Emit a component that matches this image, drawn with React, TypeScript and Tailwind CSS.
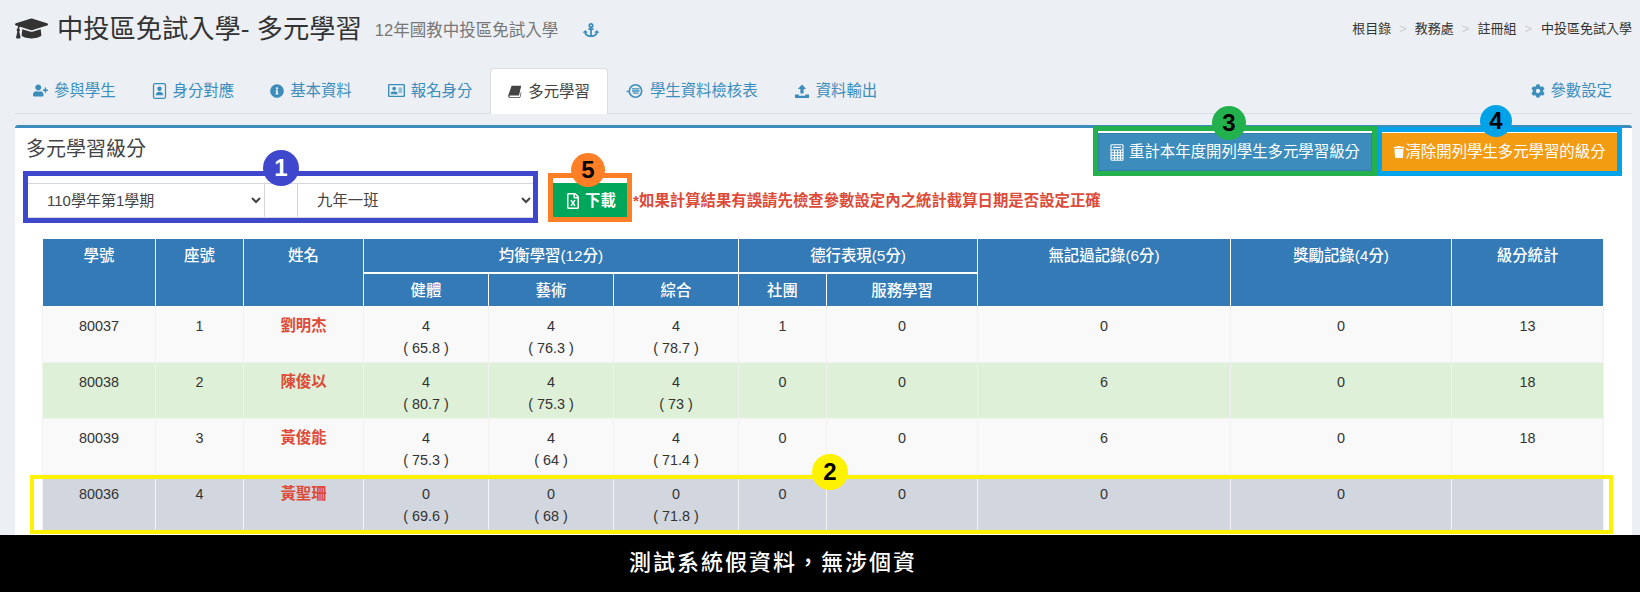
import type { ReactNode } from 'react'
import {
  FaAnchor,
  FaCog,
  FaGraduationCap,
  FaInfoCircle,
  FaRegAddressCard,
  FaRegFileExcel,
  FaTrash,
  FaUserPlus,
} from 'react-icons/fa'

const font = "font-['Liberation_Sans','Noto_Sans_CJK_TC',sans-serif]"

function BadgeIcon() {
  return (
    <svg viewBox="0 0 15 16" className="h-[16px] w-[15px]" fill="currentColor">
      <rect x="1.5" y="0.7" width="12" height="14.6" rx="1.5" fill="none" stroke="currentColor" strokeWidth="1.3" />
      <circle cx="7.5" cy="5.8" r="2.2" />
      <path d="M3.8 12.3c0-2.4 1.5-3.6 3.7-3.6s3.7 1.2 3.7 3.6z" />
    </svg>
  )
}

function BookIcon() {
  return (
    <svg viewBox="0 0 14 14" className="h-[14px] w-[14px]" fill="currentColor">
      <path d="M3.6 0.8h9.6l-2.2 9.6H2.4c-.8 0-1 .5-.9 1 .1.4.4.7 1 .7h9.2l1.2-5.2.6.5-1.3 5.4H2.2C.9 12.8 0 11.9 0.2 10.5z" />
    </svg>
  )
}

function CheckIcon() {
  return (
    <svg viewBox="0 0 18 16" className="h-[16px] w-[18px]" fill="none" stroke="currentColor">
      <circle cx="9.5" cy="8" r="6.2" strokeWidth="1.6" />
      <path d="M0.5 8.5h3" strokeWidth="1.4" />
      <path d="M6 5.8h7.5M6 8h7.5M7 10.2h5.5" strokeWidth="1.3" />
    </svg>
  )
}

function OutputIcon() {
  return (
    <svg viewBox="0 0 16 16" className="h-[16px] w-[16px]" fill="currentColor">
      <path d="M8 1.5l4.2 4.6H9.6v4.4H6.4V6.1H3.8z" />
      <path d="M1 11.5h3.8v1.2h6.4v-1.2H15v3.5H1z" />
    </svg>
  )
}

function CalcIcon() {
  return (
    <svg viewBox="0 0 14 17" className="h-[17px] w-[14px]" fill="none" stroke="currentColor" strokeWidth="1.1">
      <rect x="1" y="0.8" width="12" height="15.4" rx="0.8" />
      <path d="M3 3.4h8M1 6h12M1 8.7h12M1 11.4h12M1 14h12M4.6 6v10M7.6 6v10M10.4 6v10" />
    </svg>
  )
}

const tabs: { label: string; icon: ReactNode; active?: boolean }[] = [
  { label: '參與學生', icon: <FaUserPlus className="text-[15px]" /> },
  { label: '身分對應', icon: <BadgeIcon /> },
  { label: '基本資料', icon: <FaInfoCircle className="text-[14px]" /> },
  { label: '報名身分', icon: <FaRegAddressCard className="text-[17px]" /> },
  { label: '多元學習', icon: <BookIcon />, active: true },
  { label: '學生資料檢核表', icon: <CheckIcon /> },
  { label: '資料輸出', icon: <OutputIcon /> },
]

const rows = [
  { id: '80037', seat: '1', name: '劉明杰', a: ['4', '65.8'], b: ['4', '76.3'], c: ['4', '78.7'], club: '1', svc: '0', rec: '0', award: '0', total: '13', bg: 'bg-[#f9f9f9]', line: 'border-[#f1f1f1]' },
  { id: '80038', seat: '2', name: '陳俊以', a: ['4', '80.7'], b: ['4', '75.3'], c: ['4', '73'], club: '0', svc: '0', rec: '6', award: '0', total: '18', bg: 'bg-[#dff0d8]', line: 'border-[#f1f1f1]' },
  { id: '80039', seat: '3', name: '黃俊能', a: ['4', '75.3'], b: ['4', '64'], c: ['4', '71.4'], club: '0', svc: '0', rec: '6', award: '0', total: '18', bg: 'bg-[#f9f9f9]', line: 'border-[#f1f1f1]' },
  { id: '80036', seat: '4', name: '黃聖珊', a: ['0', '69.6'], b: ['0', '68'], c: ['0', '71.8'], club: '0', svc: '0', rec: '0', award: '0', total: '', bg: 'bg-[#d2d6de]', line: 'border-[#f4f4f4]' },
]

function Score({ v }: { v: string[] }) {
  return (
    <>
      {v[0]}
      <br />( {v[1]} )
    </>
  )
}

function Badge({ n, className }: { n: string; className: string }) {
  return (
    <div
      className={`absolute flex items-center justify-center rounded-full text-[24px] font-bold leading-none text-black ${className}`}
    >
      {n}
    </div>
  )
}

export default function App() {
  const th = 'border border-white px-2 pt-[6px] align-top text-[15.4px] font-medium'
  const td = 'border px-2 pt-[8px] pb-0 align-top'

  return (
    <div className={`relative flex h-[592px] w-[1640px] flex-col overflow-hidden bg-[#ecf0f5] text-[15.4px] text-[#333] ${font}`}>
      <div className="h-[535px] overflow-hidden">
        <div className="w-[1632px] pl-[15px]">
          {/* title */}
          <div className="flex h-[68px] items-start justify-between">
            <div className="flex items-center pt-[12px]">
              <FaGraduationCap className="mr-[9px] text-[33px] text-[#333]" />
              <span className="text-[26.25px] leading-[30px]">中投區免試入學- 多元學習</span>
              <span className="ml-[13px] pt-[3px] text-[16.5px] text-[#777]">12年國教中投區免試入學</span>
              <FaAnchor className="ml-[25px] mt-[3px] text-[16px] text-[#3c8dbc]" />
            </div>
            <div className="flex items-center gap-[8px] pt-[20px] text-[13px] leading-[18px] text-[#333]">
              <span>根目錄</span>
              <span className="text-[#ccc]">&gt;</span>
              <span>教務處</span>
              <span className="text-[#ccc]">&gt;</span>
              <span>註冊組</span>
              <span className="text-[#ccc]">&gt;</span>
              <span className="ml-[1px]">中投區免試入學</span>
            </div>
          </div>

          {/* tabs */}
          <div className="flex h-[46px] items-stretch border-b border-[#d9dee3]">
            {tabs.map((t) =>
              t.active ? (
                <div
                  key={t.label}
                  className="mb-[-1px] flex items-center gap-[6px] rounded-t-[4px] border border-b-0 border-[#ddd] bg-white px-[17px] text-[#444]"
                >
                  {t.icon}
                  {t.label}
                </div>
              ) : (
                <div key={t.label} className="flex items-center gap-[6px] px-[18px] text-[#3c8dbc]">
                  {t.icon}
                  {t.label}
                </div>
              ),
            )}
            <div className="ml-auto flex items-center gap-[5px] pr-[20px] text-[#3c8dbc]">
              <FaCog className="text-[14px]" />
              參數設定
            </div>
          </div>

          {/* panel */}
          <div className="mt-[11px] h-[420px] rounded-t-[3px] border-t-[3px] border-[#3c8dbc] bg-white">
            <div className="flex h-[55px] items-start justify-between">
              <h3 className="pl-[11px] pt-[8px] text-[20px] font-normal leading-[26px] text-[#444]">多元學習級分</h3>
              <div className="flex gap-[10px] pr-[15px] pt-[5px]">
                <button className="flex h-[38px] w-[274px] items-center justify-center gap-[5px] border border-[#367fa9] bg-[#3c8dbc] text-[15.4px] text-white">
                  <CalcIcon />
                  重計本年度開列學生多元學習級分
                </button>
                <button className="flex h-[38px] w-[235px] items-center justify-center bg-[#f39c12] text-[15.4px] text-white">
                  <FaTrash className="text-[12px]" />
                  清除開列學生多元學習的級分
                </button>
              </div>
            </div>

            <div className="flex items-center pl-[12px]">
              <div className="flex h-[35px] w-[508px] border border-[#d2d6de]">
                <select className="w-[236px] bg-white pl-[15px] pr-[4px] text-[15px] text-[#444]">
                  <option>110學年第1學期</option>
                </select>
                <div className="w-[34px] border-x border-[#d2d6de]" />
                <select className="flex-1 bg-white pl-[15px] pr-[4px] text-[15.4px] text-[#444]">
                  <option>九年一班</option>
                </select>
              </div>
              <button className="ml-[18px] flex h-[35px] w-[75px] items-center justify-center gap-[4px] bg-[#00a65a] font-bold text-white">
                <FaRegFileExcel className="text-[16px]" />
                下載
              </button>
              <span className="ml-[5px] font-bold text-[#dd4b39]">*如果計算結果有誤請先檢查參數設定內之統計截算日期是否設定正確</span>
            </div>

            <div className="pl-[27px] pt-[20px]">
              <table className="w-[1561px] table-fixed border-collapse text-center text-[14.4px] leading-[22.4px]">
                <colgroup>
                  <col className="w-[113px]" />
                  <col className="w-[88px]" />
                  <col className="w-[120px]" />
                  <col className="w-[125px]" />
                  <col className="w-[125px]" />
                  <col className="w-[125px]" />
                  <col className="w-[88px]" />
                  <col className="w-[151px]" />
                  <col className="w-[253px]" />
                  <col className="w-[221px]" />
                  <col className="w-[152px]" />
                </colgroup>
                <thead className="bg-[#337ab7] text-white">
                  <tr className="h-[34px]">
                    <th rowSpan={2} className={th}>學號</th>
                    <th rowSpan={2} className={th}>座號</th>
                    <th rowSpan={2} className={th}>姓名</th>
                    <th colSpan={3} className={`${th} border-b-2`}>均衡學習(12分)</th>
                    <th colSpan={2} className={`${th} border-b-2`}>德行表現(5分)</th>
                    <th rowSpan={2} className={th}>無記過記錄(6分)</th>
                    <th rowSpan={2} className={th}>獎勵記錄(4分)</th>
                    <th rowSpan={2} className={th}>級分統計</th>
                  </tr>
                  <tr className="h-[34px]">
                    <th className={th}>健體</th>
                    <th className={th}>藝術</th>
                    <th className={th}>綜合</th>
                    <th className={th}>社團</th>
                    <th className={th}>服務學習</th>
                  </tr>
                </thead>
                <tbody>
                  {rows.map((r) => (
                    <tr key={r.id} className={`h-[56px] ${r.bg}`}>
                      <td className={`${td} ${r.line}`}>{r.id}</td>
                      <td className={`${td} ${r.line}`}>{r.seat}</td>
                      <td className={`${td} ${r.line} text-[15.4px] font-bold text-[#dd4b39]`}>{r.name}</td>
                      <td className={`${td} ${r.line}`}><Score v={r.a} /></td>
                      <td className={`${td} ${r.line}`}><Score v={r.b} /></td>
                      <td className={`${td} ${r.line}`}><Score v={r.c} /></td>
                      <td className={`${td} ${r.line}`}>{r.club}</td>
                      <td className={`${td} ${r.line}`}>{r.svc}</td>
                      <td className={`${td} ${r.line}`}>{r.rec}</td>
                      <td className={`${td} ${r.line}`}>{r.award}</td>
                      <td className={`${td} ${r.line}`}>{r.total}</td>
                    </tr>
                  ))}
                </tbody>
              </table>
            </div>
          </div>
        </div>
      </div>

      {/* notice bar */}
      <div className="flex h-[57px] items-center justify-center bg-black pb-[2px] pr-[94px] text-[22px] font-medium tracking-[2px] text-white">
        測試系統假資料，無涉個資
      </div>

      {/* annotations */}
      <div className="absolute left-[23px] top-[171px] h-[52px] w-[515px] border-[5px] border-[#3f48cc]" />
      <Badge n="1" className="left-[263px] top-[150px] h-[36px] w-[36px] bg-[#3f48cc] text-white" />
      <div className="absolute left-[30px] top-[475px] h-[59px] w-[1583px] border-4 border-[#fff200]" />
      <Badge n="2" className="left-[812px] top-[454px] h-[36px] w-[36px] bg-[#fff200]" />
      <div className="absolute left-[1093px] top-[126px] h-[50px] w-[284px] border-[5px] border-[#22b14c]" />
      <Badge n="3" className="left-[1212px] top-[106px] h-[34px] w-[34px] bg-[#22b14c]" />
      <div className="absolute left-[1377px] top-[127px] h-[49px] w-[245px] border-[5px] border-[#00a2e8]" />
      <Badge n="4" className="left-[1480px] top-[105px] h-[32px] w-[32px] bg-[#00a2e8]" />
      <div className="absolute left-[548px] top-[173px] h-[49px] w-[84px] border-[5px] border-[#ff7f27]" />
      <Badge n="5" className="left-[571px] top-[153px] h-[34px] w-[34px] bg-[#ff7f27]" />
    </div>
  )
}
